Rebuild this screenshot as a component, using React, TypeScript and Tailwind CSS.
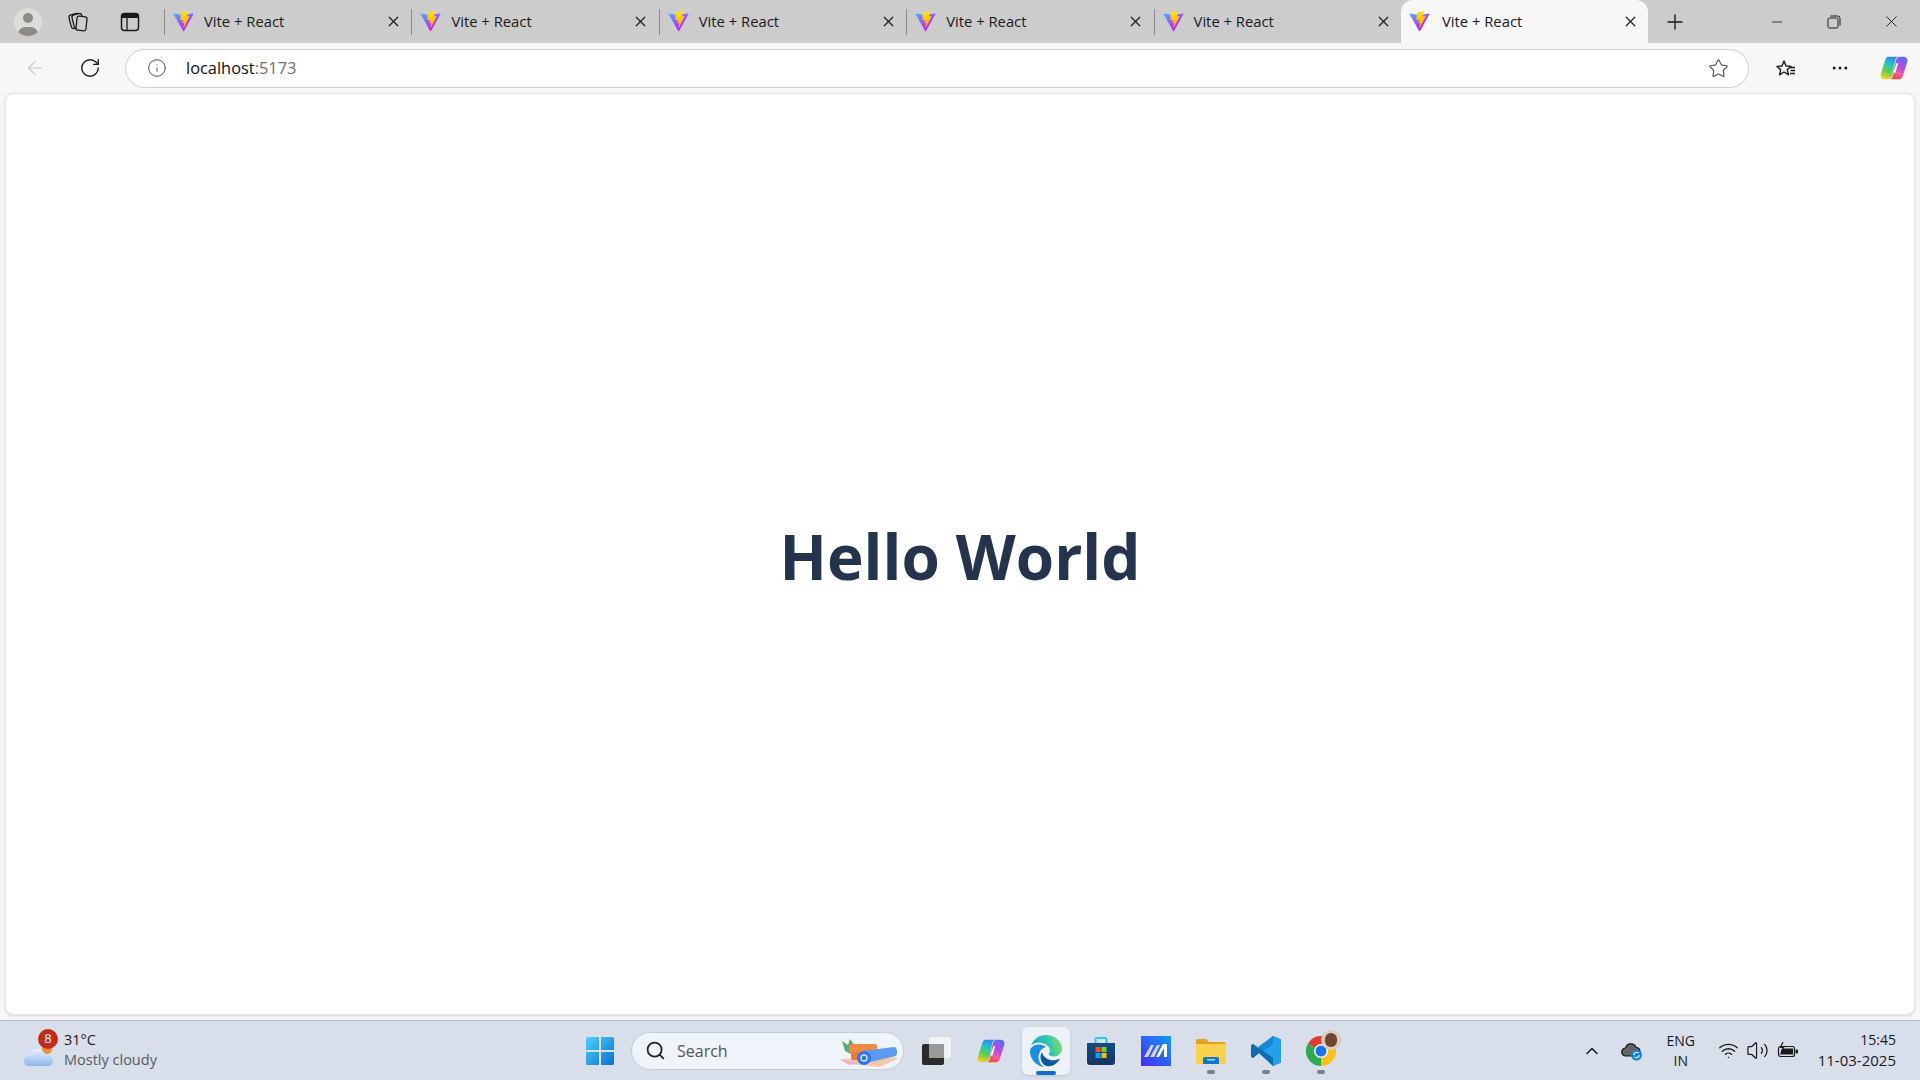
import React from "react";
import {
  ArrowLeft,
  ChevronUp,
  Info,
  Minus,
  MoreHorizontal,
  Plus,
  RotateCw,
  Search,
  Star,
  Volume2,
  Wifi,
  X,
} from "lucide-react";

const font = "font-['Open_Sans','Noto_Sans',sans-serif]";

const ViteIcon = ({ id }: { id: string }) => (
  <svg width="21" height="21" viewBox="0 0 410 404" className="shrink-0">
    <defs>
      <linearGradient id={`a${id}`} x1="6" y1="33" x2="235" y2="344" gradientUnits="userSpaceOnUse">
        <stop stopColor="#41B8FF" />
        <stop offset="1" stopColor="#C61CFE" />
      </linearGradient>
      <linearGradient id={`b${id}`} x1="194" y1="8" x2="236" y2="292" gradientUnits="userSpaceOnUse">
        <stop stopColor="#FFEA43" />
        <stop offset=".08" stopColor="#FFDD15" />
        <stop offset="1" stopColor="#FFA800" />
      </linearGradient>
    </defs>
    <path
      fill={`url(#a${id})`}
      d="M399.641 59.525 215.643 388.545c-3.799 6.793-13.559 6.833-17.415.073L10.582 59.556C6.38 52.19 12.68 43.27 21.028 44.76l184.195 32.923a10 10 0 0 0 3.559-.006l180.343-32.87c8.32-1.517 14.649 7.337 10.516 14.718Z"
    />
    <path
      fill={`url(#b${id})`}
      d="M292.965 1.574 156.801 28.255a5 5 0 0 0-4.03 4.611l-8.376 141.464c-.197 3.332 2.863 5.918 6.115 5.168l37.91-8.749c3.547-.818 6.752 2.306 6.023 5.873l-11.263 55.153c-.758 3.712 2.727 6.886 6.352 5.785l23.415-7.114c3.63-1.102 7.118 2.081 6.35 5.796l-17.899 86.633c-1.12 5.419 6.088 8.374 9.094 3.728l2.008-3.103 110.954-221.428c1.858-3.707-1.346-7.935-5.418-7.15l-39.022 7.532c-3.667.707-6.787-2.708-5.752-6.296l25.469-88.291c1.036-3.594-2.095-7.012-5.766-6.293Z"
    />
  </svg>
);

const Tab = ({ id, active }: { id: string; active?: boolean }) => (
  <div
    className={`flex h-[43px] w-[247.4px] shrink-0 items-center ${
      active ? "rounded-t-xl bg-[#f7f7f7] pl-[8px]" : "pl-0"
    }`}
  >
    {!active && <div className="mr-[8px] h-[26px] w-px bg-[#8a8a8a]" />}
    <ViteIcon id={id} />
    <span
      className={`pb-[1px] text-[14.800px] text-[#1a1a1a] ${
        active ? "ml-[12px] w-[180px]" : "ml-[10px] w-[181px]"
      }`}
    >
      Vite + React
    </span>
    <X size={17} strokeWidth={1.7} className="text-[#1a1a1a]" />
  </div>
);

const CopilotIcon = ({ size, id }: { size: number; id: string }) => (
  <svg width={size} height={size} viewBox="0 0 32 32">
    <defs>
      <linearGradient id={`c1${id}`} x1="0.6" y1="0" x2="0.3" y2="1">
        <stop stopColor="#2f8cf5" />
        <stop offset=".35" stopColor="#27c6c0" />
        <stop offset=".65" stopColor="#5fd04a" />
        <stop offset="1" stopColor="#f7d02c" />
      </linearGradient>
      <linearGradient id={`c2${id}`} x1="0.7" y1="0" x2="0.3" y2="1">
        <stop stopColor="#5d6cf2" />
        <stop offset=".4" stopColor="#b04be6" />
        <stop offset=".7" stopColor="#f05ab0" />
        <stop offset="1" stopColor="#f2502c" />
      </linearGradient>
    </defs>
    <path
      fill={`url(#c2${id})`}
      d="M22 28H11c1.500 0 3-1 3.500-3L18 8c.5-2.500 2-4 5-4h3c3.500 0 5 2.500 4 6l-4.500 14c-.7 2.500-1.500 4-3.500 4Z"
    />
    <path
      fill={`url(#c1${id})`}
      d="M10 4h11c-1.500 0-3 1-3.500 3L14 24c-.5 2.500-2 4-5 4H6c-3.500 0-5-2.500-4-6L6.500 8C7.200 5.500 8 4 10 4Z"
    />
    <path fill="#fff" d="M18.500 11h2l-3 10h-2Z" />
  </svg>
);

const CollectionsIcon = () => (
  <svg width="22" height="22" viewBox="0 0 22 22" fill="#cccccc" stroke="#1a1a1a" strokeWidth="1.300">
    <rect x="3" y="3" width="10" height="14" rx="2.500" transform="rotate(-14 8 10)" />
    <rect x="6" y="3" width="10" height="14" rx="2.500" transform="rotate(-14 11 10)" />
    <rect x="9.500" y="5.500" width="10" height="14" rx="2" transform="rotate(6 14.500 12.500)" />
  </svg>
);

const TabActionsIcon = () => (
  <svg width="20" height="20" viewBox="0 0 20 20" fill="none">
    <rect x="1.500" y="1.500" width="17" height="17" rx="3" stroke="#1a1a1a" strokeWidth="1.500" />
    <path d="M1.500 4.500a3 3 0 0 1 3-3h11a3 3 0 0 1 3 3V6h-17Z" fill="#1a1a1a" />
    <path d="M7 6v12" stroke="#1a1a1a" strokeWidth="1.300" />
  </svg>
);

const RestoreIcon = () => (
  <svg width="14" height="14" viewBox="0 0 14 14" fill="none" stroke="#1a1a1a" strokeWidth="1">
    <rect x="1" y="3" width="10" height="10" rx="1.500" />
    <path d="M3.500 1h7a2.500 2.500 0 0 1 2.500 2.500v7" />
  </svg>
);

const FavoritesIcon = () => (
  <svg width="22" height="22" viewBox="0 0 22 22" fill="none" stroke="#1a1a1a" strokeWidth="1.400" strokeLinejoin="round">
    <path d="M9 3l2 5 5 .4-3.800 3.300 1.200 5L9 14l-4.500 2.800 1.200-5L2 8.400 7 8Z" transform="translate(0 1)" />
    <path d="M15 10.500h5M15.500 13.500h4.500M15 16.500h5" />
  </svg>
);

const WeatherIcon = () => (
  <svg width="32" height="26" viewBox="0 0 32 26">
    <defs>
      <linearGradient id="cloud" x1="0" y1="0" x2="0" y2="1">
        <stop stopColor="#e8f1fb" />
        <stop offset="1" stopColor="#8cb6ea" />
      </linearGradient>
    </defs>
    <circle cx="24" cy="8" r="5" fill="#f0902a" />
    <path
      fill="url(#cloud)"
      d="M6 25c-3 0-5-2-5-5 0-2.500 2-4.500 4.500-4.800C6.500 11 10 8 14 8c4 0 7 2.500 8 6 .6-.2 1-.2 2-.2 3.500 0 6 2.500 6 5.800 0 3-2 5.400-5 5.400Z"
    />
  </svg>
);

const WindowsIcon = () => (
  <svg width="30" height="30" viewBox="0 0 30 30">
    <defs>
      <linearGradient id="win" x1="0" y1="0" x2="1" y2="1">
        <stop stopColor="#4fd0fb" />
        <stop offset="1" stopColor="#0a6fd0" />
      </linearGradient>
    </defs>
    <path fill="url(#win)" d="M1 2.500A1.500 1.500 0 0 1 2.500 1H14v13H1ZM16 1h11.500A1.500 1.500 0 0 1 29 2.500V14H16ZM1 16h13v13H2.500A1.500 1.500 0 0 1 1 27.500ZM16 16h13v11.500a1.500 1.500 0 0 1-1.500 1.500H16Z" />
  </svg>
);

const SearchArt = () => (
  <svg width="62" height="36" viewBox="0 0 62 36">
    <path d="M2 26l44-2 15 1-19 9-30-3Z" fill="#f0c9a8" />
    <path d="M2 27l18 3-8 2Z" fill="#f2a9cf" />
    <path d="M4 8l6 4 2-6 5 7-4 8-6-3Z" fill="#5aa977" />
    <rect x="11" y="11" width="28" height="9" rx="2" fill="#ef8a45" />
    <rect x="13" y="19" width="24" height="8" rx="2" fill="#f0793a" />
    <path d="M24 18l32-4c2 0 3 2 3 5s-1 4-3 4.500l-30 7Z" fill="#5b9cf2" />
    <circle cx="26" cy="25" r="7" fill="#2f74ea" />
    <circle cx="26" cy="25" r="3" fill="none" stroke="#cfe2ff" strokeWidth="1.500" />
  </svg>
);

const TaskViewIcon = () => (
  <svg width="30" height="30" viewBox="0 0 30 30">
    <rect x="1" y="8" width="22" height="21" rx="2" fill="#2a2a2a" />
    <rect x="8" y="1" width="22" height="21" rx="2" fill="#f4f5f7" fillOpacity=".9" />
    <rect x="8" y="8" width="15" height="14" fill="#9a9a9a" />
  </svg>
);

const EdgeIcon = () => (
  <svg width="32" height="32" viewBox="0 0 24 24">
    <defs>
      <linearGradient id="edge1" x1="0" y1="0.6" x2="1" y2="0.4">
        <stop stopColor="#1b9ad8" />
        <stop offset=".55" stopColor="#2cc6b0" />
        <stop offset="1" stopColor="#7ee06a" />
      </linearGradient>
    </defs>
    <path
      fill="#0f5aa6"
      d="M21.860 17.860q.14 0 .25.12.1.13.1.25t-.11.33l-.32.46-.43.53-.44.5q-.21.25-.38.42l-.22.23q-.58.53-1.340 1.040-.76.51-1.600.91-.86.4-1.740.64t-1.670.24q-.9 0-1.690-.28-.8-.28-1.480-.78-.68-.5-1.220-1.170-.53-.66-.92-1.440-.38-.77-.58-1.600-.2-.83-.2-1.670 0-1 .32-1.960.33-.97.87-1.800.14.95.55 1.770.41.82 1.020 1.500.6.68 1.380 1.210.78.54 1.640.9.86.36 1.770.56.92.2 1.800.2 1.120 0 2.180-.24 1.060-.23 2.060-.72l.2-.1.2-.05Z"
    />
    <path
      fill="#1b8fdc"
      d="M6.360 16.590q0 1.100.27 2.150.27 1.060.78 2.030.51.96 1.240 1.770.74.82 1.660 1.400-1.470-.2-2.800-.74-1.330-.55-2.480-1.370-1.150-.83-2.080-1.900-.92-1.070-1.580-2.330T.36 14.940Q0 13.540 0 12.060q0-.81.32-1.490.31-.68.83-1.230.53-.55 1.200-.96.66-.4 1.350-.66.74-.27 1.500-.39.78-.12 1.550-.12.7 0 1.420.1.72.12 1.400.35.68.23 1.320.57.63.35 1.160.83-.35 0-.7.07-.33.07-.65.23v-.02q-.63.28-1.200.74-.57.46-1.050 1.040-.48.58-.87 1.260-.38.67-.65 1.390-.27.71-.42 1.440-.15.72-.15 1.380Z"
    />
    <path
      fill="url(#edge1)"
      d="M11.960.06q1.700 0 3.330.39 1.630.38 3.070 1.150 1.430.77 2.620 1.930 1.180 1.160 1.980 2.700.49.94.76 1.960.28 1 .28 2.080 0 .89-.23 1.700-.24.8-.69 1.480-.45.68-1.100 1.220-.64.53-1.450.88-.54.24-1.110.36-.58.13-1.160.13-.42 0-.97-.03-.54-.03-1.100-.12-.55-.1-1.050-.28-.5-.19-.84-.5-.12-.09-.23-.24-.1-.16-.1-.33 0-.15.16-.35.16-.2.35-.5.2-.28.36-.68.16-.4.16-.95 0-1.060-.4-1.960-.4-.91-1.060-1.640-.66-.74-1.520-1.280-.86-.55-1.790-.89-.84-.3-1.720-.44-.87-.14-1.760-.14-1.550 0-3.060.45T.94 7.550q.71-1.740 1.810-3.130 1.100-1.380 2.520-2.350Q6.680 1.100 8.370.58q1.700-.52 3.580-.52Z"
    />
  </svg>
);

const StoreIcon = () => (
  <svg width="30" height="30" viewBox="0 0 30 30">
    <defs>
      <linearGradient id="store" x1="0" y1="0" x2="0" y2="1">
        <stop stopColor="#0f4f86" />
        <stop offset="1" stopColor="#17345e" />
      </linearGradient>
    </defs>
    <path d="M9.500 8V3.500A1.500 1.500 0 0 1 11 2h8a1.500 1.500 0 0 1 1.500 1.500V8" fill="none" stroke="#2fc4ee" strokeWidth="2" />
    <path d="M1 7h28v19a3 3 0 0 1-3 3H4a3 3 0 0 1-3-3Z" fill="url(#store)" />
    <rect x="9.500" y="11" width="5" height="5" fill="#f1511b" />
    <rect x="15.500" y="11" width="5" height="5" fill="#80cc28" />
    <rect x="9.500" y="17" width="5" height="5" fill="#00adef" />
    <rect x="15.500" y="17" width="5" height="5" fill="#fbbc09" />
  </svg>
);

const MailIcon = () => (
  <svg width="30" height="30" viewBox="0 0 30 30">
    <defs>
      <linearGradient id="ma" x1="0" y1="1" x2="1" y2="0">
        <stop stopColor="#4b2af0" />
        <stop offset="1" stopColor="#0f9bf5" />
      </linearGradient>
    </defs>
    <rect width="30" height="30" fill="url(#ma)" />
    <path d="M3 21 10 9h3L7 21Z" fill="#d9d4f7" />
    <path d="M9 21 16 9h3l-6 12Z" fill="#d9d4f7" />
    <path d="M15 21 22 8h4v13h-3v-9l-5 9Z" fill="#fff" />
  </svg>
);

const FolderIcon = () => (
  <svg width="30" height="30" viewBox="0 0 30 30">
    <path d="M0 5a2 2 0 0 1 2-2h8l3 3h15a2 2 0 0 1 2 2v4H0Z" fill="#e0a21b" />
    <path d="M0 8h30v19a1 1 0 0 1-1 1H1a1 1 0 0 1-1-1Z" fill="#fcd24d" />
    <path d="M7 23a2 2 0 0 1 2-2h12a2 2 0 0 1 2 2v5H7Z" fill="#0f78c4" />
    <rect x="11" y="23" width="8" height="1.500" fill="#9ed4f5" />
  </svg>
);

const VsCodeIcon = () => (
  <svg width="32" height="32" viewBox="0 0 32 32">
    <path d="M23 1 31 4.500v23L23 31 9 18 3 23 1 21.500v-11L3 9l6 5Z" fill="#0a77bd" />
    <path d="M23 1 31 4.500v23L23 31V23L13 16 23 9Z" fill="#23a0e8" />
    <path d="M3 9 23 23v8L9 18 3 23 1 21.500v-11Z" fill="#0d6fb0" />
    <path d="M23 9 13 16l-5-4 15-11Z" fill="#1488d4" />
  </svg>
);

const ChromeIcon = () => (
  <div className="relative h-[30px] w-[30px]">
    <svg width="30" height="30" viewBox="0 0 30 30">
      <path d="M15 15 2 7.500A15 15 0 0 1 28 7.500Z" fill="#e33b2e" />
      <path d="M15 15 28 7.500A15 15 0 0 1 15 30Z" fill="#fbc116" />
      <path d="M15 15 15 30A15 15 0 0 1 2 7.500Z" fill="#2fa84f" />
      <circle cx="15" cy="15" r="7" fill="#fff" />
      <circle cx="15" cy="15" r="5.500" fill="#1a73e8" />
    </svg>
    <div className="absolute -right-[5px] -top-[6px] flex h-5 w-5 items-center justify-center overflow-hidden rounded-full bg-[#d8cdbf]">
      <div className="h-[14px] w-[12px] rounded-full bg-[#6e4330]" />
    </div>
  </div>
);

const CloudSyncIcon = () => (
  <svg width="22" height="20" viewBox="0 0 22 20">
    <path d="M5 15a4 4 0 0 1-.5-8A5.500 5.500 0 0 1 15 6.500 4 4 0 0 1 19 10v1H12v4Z" fill="#666" stroke="#111" strokeWidth="1.200" />
    <circle cx="15.500" cy="14" r="5.500" fill="#1383e0" />
    <path d="M12.800 14a2.700 2.700 0 0 1 4.700-1.800M18.200 14a2.700 2.700 0 0 1-4.700 1.800" fill="none" stroke="#fff" strokeWidth="1.200" />
  </svg>
);

const BatteryIcon = () => (
  <svg width="22" height="20" viewBox="0 0 22 20" fill="none">
    <rect x="1.500" y="5.500" width="16" height="10" rx="2" stroke="#1a1a1a" strokeWidth="1.200" />
    <path d="M5 7.500h11v6H3Z" fill="#1a1a1a" />
    <rect x="18.500" y="8.500" width="2.500" height="4" rx="1" fill="#1a1a1a" />
    <path d="M6 1 3.500 6.500h3L4.500 10" stroke="#1a1a1a" strokeWidth="1.200" />
  </svg>
);

const TaskItem = ({
  children,
  dot,
  active,
}: {
  children: React.ReactNode;
  dot?: boolean;
  active?: boolean;
}) => (
  <div
    className={`relative mx-[3.500px] flex h-[48px] w-[48px] items-center justify-center rounded-md ${
      active ? "bg-[#edf1f8] shadow-sm" : ""
    }`}
  >
    {children}
    {dot && <div className="absolute bottom-[1px] h-[4px] w-[8px] rounded-full bg-[#7a7f87]" />}
    {active && <div className="absolute bottom-0 h-[4px] w-5 rounded-full bg-[#0f6fd0]" />}
  </div>
);

export default function App() {
  return (
    <div className={`flex h-screen w-full flex-col overflow-hidden bg-[#f7f7f7] ${font}`}>
      {/* tab strip */}
      <div className="flex h-[43px] shrink-0 items-center bg-[#cccccc]">
        <div className="flex w-[56px] shrink-0 justify-center">
          <div className="relative flex h-7 w-7 items-center justify-center overflow-hidden rounded-full bg-[#dedcd8]">
            <div className="absolute top-[5px] h-[10px] w-[10px] rounded-full bg-[#8e8a84]" />
            <div className="absolute -bottom-[6px] h-[15px] w-5 rounded-full bg-[#8e8a84]" />
          </div>
        </div>
        <div className="flex w-[44px] shrink-0 justify-center">
          <CollectionsIcon />
        </div>
        <div className="flex w-[60px] shrink-0 justify-center">
          <TabActionsIcon />
        </div>
        <div className="w-[4px] shrink-0" />
        <Tab id="1" />
        <Tab id="2" />
        <Tab id="3" />
        <Tab id="4" />
        <Tab id="5" />
        <Tab id="6" active />
        <Plus size={24} strokeWidth={1.4} className="ml-[15px] text-[#1a1a1a]" />
        <div className="ml-auto flex items-center">
          <div className="flex w-[57px] justify-center">
            <Minus size={16} strokeWidth={1.2} className="text-[#1a1a1a]" />
          </div>
          <div className="flex w-[57px] justify-center">
            <RestoreIcon />
          </div>
          <div className="flex w-[58px] justify-center">
            <X size={19} strokeWidth={1.2} className="text-[#1a1a1a]" />
          </div>
        </div>
      </div>

      {/* toolbar */}
      <div className="flex h-[50px] shrink-0 items-center">
        <div className="flex w-[69px] justify-center">
          <ArrowLeft size={22} strokeWidth={1.2} className="text-[#c4c4c4]" />
        </div>
        <div className="flex w-[42px] justify-center">
          <RotateCw size={22} strokeWidth={1.5} className="text-[#1a1a1a]" />
        </div>
        <div className="ml-[14px] flex h-[39px] w-[1624px] items-center rounded-full border border-[#d0d0d0] bg-white pl-[21px] pr-[19px]">
          <Info size={20} strokeWidth={1.2} className="text-[#555]" />
          <span className="ml-[19px] text-[16.400px] text-[#111]">
            localhost<span className="text-[#6e6e6e]">:5173</span>
          </span>
          <Star size={21} strokeWidth={1.3} className="ml-auto text-[#555]" />
        </div>
        <div className="ml-[26px] flex w-[22px] justify-center">
          <FavoritesIcon />
        </div>
        <div className="ml-[32px] flex w-[22px] justify-center">
          <MoreHorizontal size={20} strokeWidth={1.6} className="text-[#1a1a1a]" />
        </div>
        <div className="ml-[28px]">
          <CopilotIcon size={30} id="top" />
        </div>
      </div>

      {/* page */}
      <div className="flex min-h-0 flex-1 px-[5px] pb-[5px]">
        <div className="flex flex-1 items-center justify-center rounded-lg border border-[#e8e8e8] bg-white pt-[4px] shadow-sm">
          <h1 className="text-[62px] font-bold text-[#24344d]">Hello World</h1>
        </div>
      </div>

      {/* taskbar */}
      <div className="flex h-[60px] shrink-0 items-center border-t border-[#b4b9c4] bg-[#d8deea]">
        <div className="flex w-[585px] shrink-0 items-center pl-[23px]">
          <div className="relative mt-[6px]">
            <WeatherIcon />
            <div className="absolute -top-[12px] left-[15px] flex h-5 w-5 items-center justify-center rounded-full bg-[#c42b1c] text-[13px] text-white">
              8
            </div>
          </div>
          <div className="ml-[9px] flex flex-col pb-[2px] text-[14.500px] leading-[20px]">
            <span className="text-[#1a1a1a]">31°C</span>
            <span className="text-[#555a63]">Mostly cloudy</span>
          </div>
        </div>
        <WindowsIcon />
        <div className="ml-[16px] flex h-[38px] w-[273px] shrink-0 items-center rounded-full border border-[#c6ccd8] bg-[#eff3fa] pl-[13px] pr-[3px]">
          <Search size={21} strokeWidth={2} className="text-[#222]" />
          <span className="ml-[11px] text-[16px] text-[#555]">Search</span>
          <div className="ml-auto">
            <SearchArt />
          </div>
        </div>
        <div className="ml-[4px] flex items-center">
          <TaskItem>
            <TaskViewIcon />
          </TaskItem>
          <TaskItem>
            <CopilotIcon size={30} id="bar" />
          </TaskItem>
          <TaskItem active>
            <EdgeIcon />
          </TaskItem>
          <TaskItem>
            <StoreIcon />
          </TaskItem>
          <TaskItem>
            <MailIcon />
          </TaskItem>
          <TaskItem dot>
            <FolderIcon />
          </TaskItem>
          <TaskItem dot>
            <VsCodeIcon />
          </TaskItem>
          <TaskItem dot>
            <ChromeIcon />
          </TaskItem>
        </div>
        <div className="ml-auto flex items-center pr-[24px]">
          <ChevronUp size={20} strokeWidth={1.8} className="text-[#1a1a1a]" />
          <div className="ml-[19px]">
            <CloudSyncIcon />
          </div>
          <div className="ml-[18px] flex w-[40px] flex-col items-center text-[14px] leading-[20px] text-[#1a1a1a]">
            <span>ENG</span>
            <span>IN</span>
          </div>
          <Wifi size={21} strokeWidth={1.6} className="ml-[17px] text-[#1a1a1a]" />
          <Volume2 size={23} strokeWidth={1.3} className="ml-[7px] text-[#1a1a1a]" />
          <div className="ml-[8px]">
            <BatteryIcon />
          </div>
          <div className="ml-[19px] flex flex-col items-end pb-[2px] leading-[20px] text-[#1a1a1a]">
            <span className="text-[14px]">15:45</span>
            <span className="text-[15px]">11-03-2025</span>
          </div>
        </div>
      </div>
    </div>
  );
}
